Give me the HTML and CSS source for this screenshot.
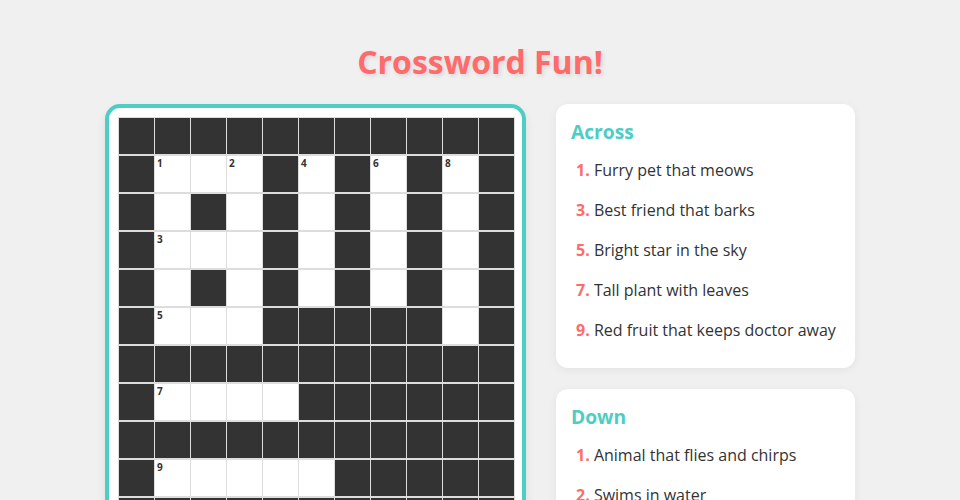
FILE: index.html
```html
<!DOCTYPE html>
<html lang="en">
<head>
<meta charset="utf-8">
<title>Crossword Fun!</title>
<link rel="stylesheet" href="styles.css">
</head>
<body>
<h1 class="title">Crossword Fun!</h1>
<main class="layout">
  <section class="board">
    <div class="grid">
      <div class="cell dark"></div><div class="cell dark"></div><div class="cell dark"></div><div class="cell dark"></div><div class="cell dark"></div><div class="cell dark"></div><div class="cell dark"></div><div class="cell dark"></div><div class="cell dark"></div><div class="cell dark"></div><div class="cell dark"></div>

      <div class="cell dark"></div><div class="cell"><span class="n">1</span></div><div class="cell"></div><div class="cell"><span class="n">2</span></div><div class="cell dark"></div><div class="cell"><span class="n">4</span></div><div class="cell dark"></div><div class="cell"><span class="n">6</span></div><div class="cell dark"></div><div class="cell"><span class="n">8</span></div><div class="cell dark"></div>

      <div class="cell dark"></div><div class="cell"></div><div class="cell dark"></div><div class="cell"></div><div class="cell dark"></div><div class="cell"></div><div class="cell dark"></div><div class="cell"></div><div class="cell dark"></div><div class="cell"></div><div class="cell dark"></div>

      <div class="cell dark"></div><div class="cell"><span class="n">3</span></div><div class="cell"></div><div class="cell"></div><div class="cell dark"></div><div class="cell"></div><div class="cell dark"></div><div class="cell"></div><div class="cell dark"></div><div class="cell"></div><div class="cell dark"></div>

      <div class="cell dark"></div><div class="cell"></div><div class="cell dark"></div><div class="cell"></div><div class="cell dark"></div><div class="cell"></div><div class="cell dark"></div><div class="cell"></div><div class="cell dark"></div><div class="cell"></div><div class="cell dark"></div>

      <div class="cell dark"></div><div class="cell"><span class="n">5</span></div><div class="cell"></div><div class="cell"></div><div class="cell dark"></div><div class="cell dark"></div><div class="cell dark"></div><div class="cell dark"></div><div class="cell dark"></div><div class="cell"></div><div class="cell dark"></div>

      <div class="cell dark"></div><div class="cell dark"></div><div class="cell dark"></div><div class="cell dark"></div><div class="cell dark"></div><div class="cell dark"></div><div class="cell dark"></div><div class="cell dark"></div><div class="cell dark"></div><div class="cell dark"></div><div class="cell dark"></div>

      <div class="cell dark"></div><div class="cell"><span class="n">7</span></div><div class="cell"></div><div class="cell"></div><div class="cell"></div><div class="cell dark"></div><div class="cell dark"></div><div class="cell dark"></div><div class="cell dark"></div><div class="cell dark"></div><div class="cell dark"></div>

      <div class="cell dark"></div><div class="cell dark"></div><div class="cell dark"></div><div class="cell dark"></div><div class="cell dark"></div><div class="cell dark"></div><div class="cell dark"></div><div class="cell dark"></div><div class="cell dark"></div><div class="cell dark"></div><div class="cell dark"></div>

      <div class="cell dark"></div><div class="cell"><span class="n">9</span></div><div class="cell"></div><div class="cell"></div><div class="cell"></div><div class="cell"></div><div class="cell dark"></div><div class="cell dark"></div><div class="cell dark"></div><div class="cell dark"></div><div class="cell dark"></div>

      <div class="cell dark"></div><div class="cell dark"></div><div class="cell dark"></div><div class="cell dark"></div><div class="cell dark"></div><div class="cell dark"></div><div class="cell dark"></div><div class="cell dark"></div><div class="cell dark"></div><div class="cell dark"></div><div class="cell dark"></div>
    </div>
  </section>
  <aside class="clues">
    <div class="card">
      <h2 class="card-title">Across</h2>
      <ul class="clue-list">
        <li><span class="num">1.</span> Furry pet that meows</li>
        <li><span class="num">3.</span> Best friend that barks</li>
        <li><span class="num">5.</span> Bright star in the sky</li>
        <li><span class="num">7.</span> Tall plant with leaves</li>
        <li><span class="num">9.</span> Red fruit that keeps doctor away</li>
      </ul>
    </div>
    <div class="card">
      <h2 class="card-title">Down</h2>
      <ul class="clue-list">
        <li><span class="num">1.</span> Animal that flies and chirps</li>
        <li><span class="num">2.</span> Swims in water</li>
        <li><span class="num">4.</span> Has wheels and drives</li>
        <li><span class="num">6.</span> Falls from the sky when raining</li>
        <li><span class="num">8.</span> Yellow fruit monkeys love</li>
      </ul>
    </div>
  </aside>
</main>
</body>
</html>
```

FILE: styles.css
```css
* { box-sizing: border-box; }

body {
  margin: 0;
  padding: 0;
  background: #f0f0f0;
  font-family: "Open Sans", "Noto Sans", sans-serif;
  color: #333;
}

.title {
  margin: 39px 0 19px;
  text-align: center;
  font-size: 32px;
  line-height: 46px;
  font-weight: 700;
  color: #ff6b6b;
  text-shadow: 2px 2px 4px rgba(0, 0, 0, 0.1);
}

.layout {
  width: 750px;
  margin: 0 auto;
  display: flex;
  align-items: flex-start;
  gap: 30px;
}

.board {
  flex: none;
  width: 421px;
  background: #fff;
  border: 4px solid #4ecdc4;
  border-radius: 15px;
  padding: 9px 7px 9px 9px;
  box-shadow: 0 4px 10px rgba(0, 0, 0, 0.08);
}

.grid {
  display: grid;
  grid-template-columns: repeat(11, 35px);
  grid-auto-rows: 35.7px;
  column-gap: 1px;
  row-gap: 2.3px;
  padding: 1px;
  background: #ddd;
  width: 397px;
}

.cell {
  position: relative;
  background: #fff;
}

.cell.dark { background: #333; }

.n {
  position: absolute;
  top: 1px;
  left: 2px;
  font-size: 10px;
  font-weight: 700;
  line-height: 12px;
  color: #333;
}

.clues {
  flex: 1;
  display: flex;
  flex-direction: column;
  gap: 21px;
}

.card {
  background: #fff;
  border-radius: 12px;
  padding: 15px 15px 18px;
  box-shadow: 0 2px 10px rgba(0, 0, 0, 0.06);
}

.card-title {
  margin: 0 0 6px;
  font-size: 19.2px;
  line-height: 25px;
  font-weight: 700;
  color: #4ecdc4;
}

.clue-list {
  list-style: none;
  margin: 0;
  padding: 0;
}

.clue-list li {
  padding: 9px 0 9px 5px;
  font-size: 16px;
  line-height: 22px;
  color: #333;
  white-space: nowrap;
}

.num {
  font-weight: 700;
  color: #ff6b6b;
}
```
